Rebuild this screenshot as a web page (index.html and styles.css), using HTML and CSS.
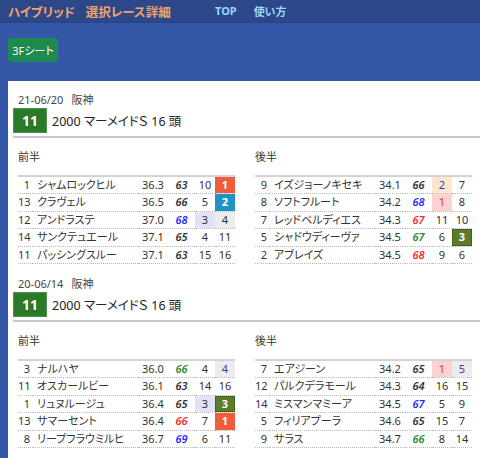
FILE: index.html
```html
<!DOCTYPE html>
<html lang="ja">
<head>
<meta charset="utf-8">
<title>選択レース詳細</title>
<link rel="stylesheet" href="styles.css">
</head>
<body>
<header class="topbar">
  <div class="title"><span>ハイブリッド</span><span class="sub">選択レース詳細</span></div>
  <nav class="nav"><a href="#">TOP</a><a href="#">使い方</a></nav>
</header>
<div class="toolbar"><button class="btn">3Fシート</button></div>
<main class="card">
  <section class="race">
    <div class="race-date">21-06/20<span class="place">阪神</span></div>
    <div class="race-head"><span class="rno">11</span><span class="rname">2000 マーメイドＳ 16 頭</span></div>
    <div class="halves">
      <div class="half">
        <div class="half-title">前半</div>
        <table class="tbl">
          <colgroup><col class="c-no"><col class="c-name"><col class="c-time"><col class="c-idx"><col class="c-rk"><col class="c-rk2"></colgroup>
          <tr><td class="no">1</td><td class="nm">シャムロックヒル</td><td class="tm">36.3</td><td class="ix">63</td><td class="rk">10</td><td class="rk2 hot1">1</td></tr>
          <tr><td class="no">13</td><td class="nm">クラヴェル</td><td class="tm">36.5</td><td class="ix">66</td><td class="rk">5</td><td class="rk2 hot2">2</td></tr>
          <tr><td class="no">12</td><td class="nm">アンドラステ</td><td class="tm">37.0</td><td class="ix blue">68</td><td class="rk lav">3</td><td class="rk2 grey">4</td></tr>
          <tr><td class="no">14</td><td class="nm">サンクテュエール</td><td class="tm">37.1</td><td class="ix">65</td><td class="rk">4</td><td class="rk2">11</td></tr>
          <tr><td class="no">11</td><td class="nm">パッシングスルー</td><td class="tm">37.1</td><td class="ix">63</td><td class="rk">15</td><td class="rk2">16</td></tr>
        </table>
      </div>
      <div class="half">
        <div class="half-title">後半</div>
        <table class="tbl">
          <colgroup><col class="c-no"><col class="c-name"><col class="c-time"><col class="c-idx"><col class="c-rk"><col class="c-rk2"></colgroup>
          <tr><td class="no">9</td><td class="nm">イズジョーノキセキ</td><td class="tm">34.1</td><td class="ix">66</td><td class="rk peach">2</td><td class="rk2">7</td></tr>
          <tr><td class="no">8</td><td class="nm">ソフトフルート</td><td class="tm">34.2</td><td class="ix blue">68</td><td class="rk pink">1</td><td class="rk2">8</td></tr>
          <tr><td class="no">7</td><td class="nm">レッドベルディエス</td><td class="tm">34.3</td><td class="ix red">67</td><td class="rk">11</td><td class="rk2">10</td></tr>
          <tr><td class="no">5</td><td class="nm">シャドウディーヴァ</td><td class="tm">34.5</td><td class="ix green">67</td><td class="rk">6</td><td class="rk2 hot3">3</td></tr>
          <tr><td class="no">2</td><td class="nm">アブレイズ</td><td class="tm">34.5</td><td class="ix red">68</td><td class="rk">9</td><td class="rk2">6</td></tr>
        </table>
      </div>
    </div>
  </section>
  <section class="race">
    <div class="race-date">20-06/14<span class="place">阪神</span></div>
    <div class="race-head"><span class="rno">11</span><span class="rname">2000 マーメイドＳ 16 頭</span></div>
    <div class="halves">
      <div class="half">
        <div class="half-title">前半</div>
        <table class="tbl">
          <colgroup><col class="c-no"><col class="c-name"><col class="c-time"><col class="c-idx"><col class="c-rk"><col class="c-rk2"></colgroup>
          <tr><td class="no">3</td><td class="nm">ナルハヤ</td><td class="tm">36.0</td><td class="ix green">66</td><td class="rk">4</td><td class="rk2 grey navy">4</td></tr>
          <tr><td class="no">11</td><td class="nm">オスカールビー</td><td class="tm">36.1</td><td class="ix">63</td><td class="rk">14</td><td class="rk2">16</td></tr>
          <tr><td class="no">1</td><td class="nm">リュヌルージュ</td><td class="tm">36.4</td><td class="ix">65</td><td class="rk lav">3</td><td class="rk2 hot3">3</td></tr>
          <tr><td class="no">13</td><td class="nm">サマーセント</td><td class="tm">36.4</td><td class="ix red">66</td><td class="rk">7</td><td class="rk2 hot1">1</td></tr>
          <tr><td class="no">8</td><td class="nm">リープフラウミルヒ</td><td class="tm">36.7</td><td class="ix blue">69</td><td class="rk">6</td><td class="rk2">11</td></tr>
        </table>
      </div>
      <div class="half">
        <div class="half-title">後半</div>
        <table class="tbl">
          <colgroup><col class="c-no"><col class="c-name"><col class="c-time"><col class="c-idx"><col class="c-rk"><col class="c-rk2"></colgroup>
          <tr><td class="no">7</td><td class="nm">エアジーン</td><td class="tm">34.2</td><td class="ix">65</td><td class="rk pink">1</td><td class="rk2 grey navy">5</td></tr>
          <tr><td class="no">12</td><td class="nm">パルクデラモール</td><td class="tm">34.3</td><td class="ix">64</td><td class="rk">16</td><td class="rk2">15</td></tr>
          <tr><td class="no">14</td><td class="nm">ミスマンマミーア</td><td class="tm">34.5</td><td class="ix blue">67</td><td class="rk">5</td><td class="rk2">9</td></tr>
          <tr><td class="no">5</td><td class="nm">フィリアプーラ</td><td class="tm">34.6</td><td class="ix">65</td><td class="rk">15</td><td class="rk2">7</td></tr>
          <tr><td class="no">9</td><td class="nm">サラス</td><td class="tm">34.7</td><td class="ix green">66</td><td class="rk">8</td><td class="rk2">14</td></tr>
        </table>
      </div>
    </div>
  </section>
</main>
</body>
</html>
```
FILE: styles.css
```css
html, body {
  margin: 0;
  padding: 0;
}
body {
  background: #3457a7;
  font-family: "Noto Sans", "Noto Sans CJK JP", sans-serif;
  font-feature-settings: "palt";
  color: #333;
  overflow: hidden;
  height: 458px;
}
.topbar {
  height: 22px;
  background: #2c4889;
  display: flex;
  align-items: center;
  padding-left: 8px;
  box-shadow: 0 1px 0 #294280;
}
.title {
  width: 207px;
  color: #f4a06c;
  font-weight: bold;
  font-size: 12.5px;
  white-space: nowrap;
}
.title .sub {
  margin-left: 11px;
}
.nav {
  display: flex;
  gap: 17px;
}
.nav a {
  color: #9ad6ff;
  font-size: 11px;
  font-weight: bold;
  text-decoration: none;
}
.toolbar {
  padding: 16px 0 0 8px;
  height: 43px;
  box-sizing: border-box;
  margin-bottom: 16px;
}
.btn {
  width: 50px;
  height: 24px;
  background: #1d8a4f;
  color: #fff;
  border: 0;
  border-radius: 3px;
  font-family: inherit;
  font-feature-settings: "palt";
  font-size: 11px;
  padding: 0;
}
.card {
  background: #fff;
  margin-left: 8px;
  padding: 11px 0 0 5px;
  height: 366px;
  overflow: hidden;
}
.race {
  margin-bottom: 12px;
}
.race-date {
  padding-left: 5px;
  font-size: 11px;
  line-height: 16px;
  color: #444;
}
.place {
  margin-left: 8px;
}
.race-head {
  display: flex;
  align-items: center;
  gap: 5px;
  padding-bottom: 3px;
  border-bottom: 2px solid #cacaca;
}
.rno {
  width: 34px;
  height: 25px;
  box-sizing: border-box;
  background: #2b7a2a;
  border: 1px solid #4f944c;
  color: #fff;
  font-weight: bold;
  font-size: 14px;
  display: flex;
  align-items: center;
  justify-content: center;
}
.rname {
  font-size: 12.5px;
  color: #222;
}
.halves {
  display: flex;
  gap: 20px;
  padding-left: 5px;
  width: 454px;
}
.half {
  width: 217px;
}
.half-title {
  font-size: 11px;
  line-height: 16px;
  margin-top: 11px;
  margin-bottom: 10px;
  color: #333;
}
.tbl {
  width: 217px;
  table-layout: fixed;
  border-collapse: collapse;
  border-top: 2px solid #d2d2d2;
  font-size: 11px;
}
.c-no { width: 15px; }
.c-name { width: 105px; }
.c-time { width: 30px; }
.c-idx { width: 27px; }
.c-rk { width: 20px; }
.c-rk2 { width: 20px; }
.tbl td {
  padding: 0;
  line-height: 16.4px;
  border-bottom: 1px dotted #b8b8b8;
  white-space: nowrap;
  overflow: hidden;
  color: #333;
}
.tbl td.no {
  text-align: right;
  padding-right: 3px;
}
.tbl td.nm {
  padding-left: 4px;
}
.tbl td.tm,
.tbl td.rk,
.tbl td.rk2 {
  text-align: center;
}
.tbl td.ix {
  text-align: center;
  font-style: italic;
  font-weight: 600;
  color: #333;
}
.tbl td.ix.blue { color: #2a2aff; }
.tbl td.ix.red { color: #ff2b2b; }
.tbl td.ix.green { color: #2f8a2f; }
.tbl td.hot1 { background: #f15c3b; color: #fff; font-weight: bold; }
.tbl td.hot2 { background: #1f93c5; color: #fff; font-weight: bold; }
.tbl td.hot3 { background: #5b7c2b; color: #fff; font-weight: bold; box-shadow: inset 0 0 0 1px #44621c; }
.tbl td.lav { background: #e1e1f9; }
.tbl td.grey { background: #ececec; }
.tbl td.navy { color: #3c3c9c; }
.tbl td.peach { background: #fde6c9; color: #3232e6; }
.tbl td.pink { background: #fdd1d1; color: #e53535; }
```
